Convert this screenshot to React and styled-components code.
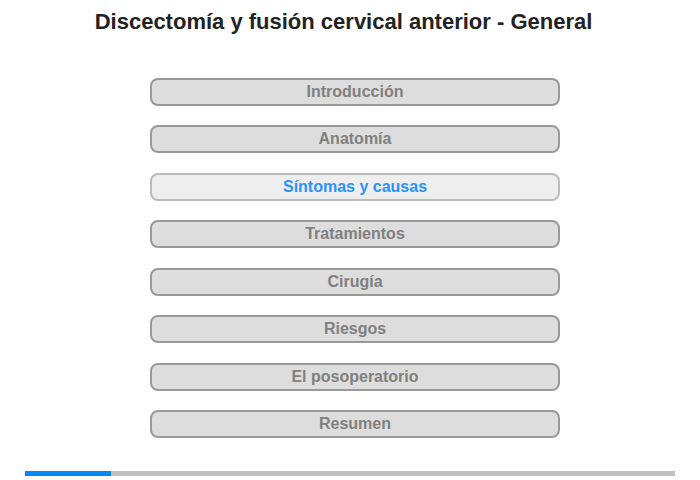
import styled, { createGlobalStyle } from "styled-components";

const GlobalStyle = createGlobalStyle`
  body {
    margin: 0;
    background: #fff;
    font-family: "Liberation Sans", Arial, sans-serif;
  }
`;

const sections = [
  "Introducción",
  "Anatomía",
  "Síntomas y causas",
  "Tratamientos",
  "Cirugía",
  "Riesgos",
  "El posoperatorio",
  "Resumen",
];

const App = () => {
  const current = 2;
  const progress = 13.2;
  return (
    <Page>
      <GlobalStyle />
      <Title>Discectomía y fusión cervical anterior - General</Title>
      <Menu>
        {sections.map((name, i) => (
          <MenuButton key={name} $active={i === current}>
            {name}
          </MenuButton>
        ))}
      </Menu>
      <Track>
        <Fill style={{ width: `${progress}%` }} />
      </Track>
    </Page>
  );
};

const Page = styled.div`
  width: 700px;
  height: 480px;
  display: flex;
  flex-direction: column;
  align-items: center;
`;

const Title = styled.h1`
  margin: 9px 13px 0 0;
  font-size: 22px;
  line-height: 25px;
  font-weight: bold;
  color: #222;
`;

const Menu = styled.div`
  margin: 44px 0 0 10px;
  width: 410px;
  display: flex;
  flex-direction: column;
  gap: 19.43px;
`;

const MenuButton = styled.div`
  box-sizing: border-box;
  height: 28px;
  border: 2px solid ${(p) => (p.$active ? "#bbb" : "#999")};
  border-radius: 8px;
  background: ${(p) => (p.$active ? "#eee" : "#ddd")};
  color: ${(p) => (p.$active ? "#2b92ff" : "#808080")};
  font-size: 16px;
  font-weight: bold;
  display: flex;
  align-items: center;
  justify-content: center;
  cursor: pointer;
`;

const Track = styled.div`
  margin-top: 33px;
  width: 650px;
  height: 5px;
  background: #c0c0c0;
`;

const Fill = styled.div`
  height: 100%;
  background: #0088ff;
`;

export default App;
